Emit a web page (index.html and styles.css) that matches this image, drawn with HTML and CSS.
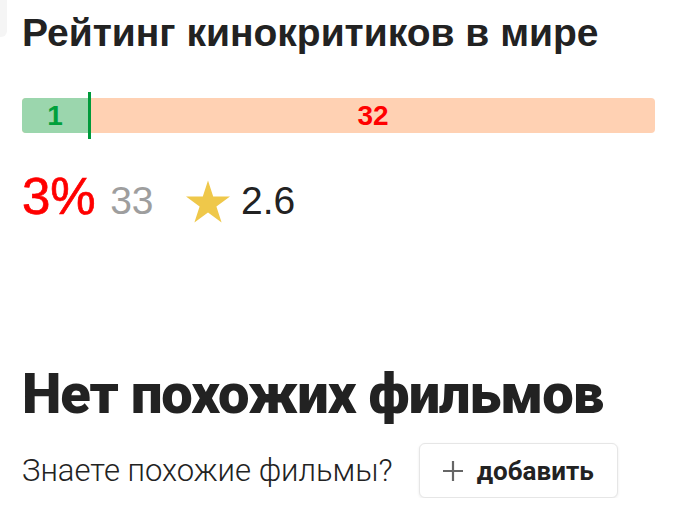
FILE: index.html
```html
<!DOCTYPE html>
<html lang="ru">
<head>
  <meta charset="UTF-8">
  <meta name="viewport" content="width=device-width, initial-scale=1.0">
  <title>Рейтинг кинокритиков</title>
  <link rel="stylesheet" href="styles.css">
</head>
<body>
  <div class="corner"></div>

  <div class="page">
    <!-- World critics rating -->
    <section class="critics">
      <h2 class="critics-title">Рейтинг кинокритиков в мире</h2>

      <div class="ratio-bar">
        <div class="ratio-positive" style="width: 66px;">1</div>
        <div class="ratio-divider"></div>
        <div class="ratio-negative">32</div>
      </div>

      <div class="critics-stats">
        <span class="percent">3%</span>
        <span class="count">33</span>
        <span class="score">
          <svg class="star" viewBox="0 0 44 43" width="44" height="43">
            <path d="M22 .6L27.2 16.6H44L30.4 26.5 35.6 42.4 22 32.6 8.4 42.4 13.6 26.5 0 16.6H16.8Z" fill="#efc84a"/>
          </svg>2.6</span>
      </div>
    </section>

    <!-- Similar movies -->
    <section class="similar">
      <h2 class="similar-title">Нет похожих фильмов</h2>
      <div class="similar-row">
        <span class="similar-question">Знаете похожие фильмы?</span>
        <button class="add-button" type="button">
          <svg class="plus" viewBox="0 0 20 20" width="20" height="20">
            <path d="M10 0v20M0 10h20" stroke="#666" stroke-width="2.2"/>
          </svg>
          добавить
        </button>
      </div>
    </section>
  </div>
</body>
</html>
```

FILE: styles.css
```css
body {
  margin: 0;
  padding: 0;
  background: #fff;
  font-family: "Liberation Sans", Arial, sans-serif;
  color: #222;
}
.corner {
  position: absolute;
  top: 0;
  left: 0;
  width: 7px;
  height: 37px;
  background: #f5f5f5;
  border-bottom-right-radius: 6px;
}
.page {
  padding: 0 26px 0 22px;
}
.critics-title {
  margin: 0;
  padding-top: 10px;
  font-size: 39px;
  font-weight: 700;
  line-height: 46px;
  color: #222;
}
.ratio-bar {
  display: flex;
  height: 35px;
  margin-top: 42px;
  border-radius: 4px;
  background: #ffd1b3;
  font-size: 28px;
  font-weight: 700;
  line-height: 35px;
}
.ratio-positive {
  flex: none;
  border-radius: 4px 0 0 4px;
  background: #9bd6ad;
  color: #00a03c;
  text-align: center;
}
.ratio-divider {
  flex: none;
  width: 3px;
  margin: -6px 0;
  background: #009a3b;
}
.ratio-negative {
  flex: 1;
  color: #ff0000;
  text-align: center;
}
.critics-stats {
  height: 60px;
  margin-top: 34px;
  line-height: 60px;
}
.percent {
  font-size: 51px;
  color: #ff0000;
  -webkit-text-stroke: 0.7px #ff0000;
}
.count {
  margin-left: 10px;
  font-size: 39px;
  color: #9e9e9e;
}
.score {
  margin-left: 28px;
  font-size: 39px;
  color: #222;
}
.star {
  margin-right: 11px;
  vertical-align: -9px;
}
.similar {
  margin-top: 137px;
}
.similar-title {
  margin: 0;
  font-family: Roboto, "Liberation Sans", sans-serif;
  font-size: 56px;
  font-weight: 900;
  line-height: 60px;
  letter-spacing: -1px;
  color: #222;
}
.similar-row {
  display: flex;
  align-items: center;
  margin-top: 19px;
}
.similar-question {
  font-family: Roboto, "Liberation Sans", sans-serif;
  font-size: 31px;
  font-weight: 300;
  color: #222;
}
.add-button {
  display: flex;
  align-items: center;
  gap: 14px;
  height: 55px;
  margin-left: 26px;
  padding: 0 23px;
  border: 1px solid #e6e6e6;
  border-radius: 6px;
  background: #fff;
  box-shadow: 0 1px 3px rgba(0, 0, 0, 0.08);
  font-family: Roboto, "Liberation Sans", sans-serif;
  font-size: 26px;
  font-weight: 700;
  color: #222;
}
.plus {
  flex: none;
}
```
